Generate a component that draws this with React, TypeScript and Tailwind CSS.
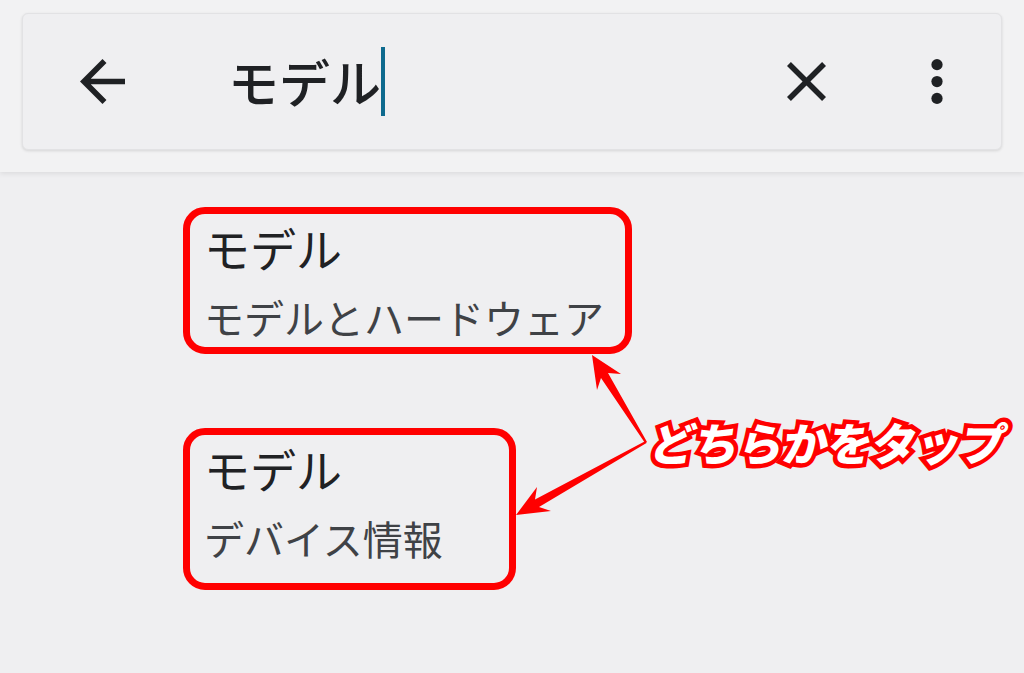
import React from "react";

const jp = "font-['Noto_Sans_CJK_JP','Noto_Sans',sans-serif]";

function BackIcon() {
  return (
    <svg width="45" height="45" viewBox="4 4 16 16" className="shrink-0 fill-[#1f2124]">
      <path d="M20 11H7.83l5.59-5.59L12 4l-8 8 8 8 1.41-1.41L7.83 13H20v-2z" />
    </svg>
  );
}

function CloseIcon() {
  return (
    <svg width="39" height="39" viewBox="5 5 14 14" className="shrink-0 fill-[#1f2124]">
      <path d="M19 6.41L17.59 5 12 10.59 6.41 5 5 6.41 10.59 12 5 17.59 6.41 19 12 13.41 17.59 19 19 17.59 13.41 12z" />
    </svg>
  );
}

function MoreIcon() {
  return (
    <svg width="12" height="45" viewBox="10 4 4 16" className="shrink-0 fill-[#1f2124]">
      <circle cx="12" cy="6" r="2" />
      <circle cx="12" cy="12" r="2" />
      <circle cx="12" cy="18" r="2" />
    </svg>
  );
}

interface ResultProps {
  title: string;
  path: string;
  width: string;
  height: string;
}

function Result({ title, path, width, height }: ResultProps) {
  return (
    <div className={`${width} ${height} border-[7px] border-[#ff0000] rounded-[22px] pl-[14px] pt-[7px] flex flex-col`}>
      <div className="text-[46px] leading-[52px] text-[#202124]">{title}</div>
      <div className="text-[40px] leading-[48px] text-[#3f4246] mt-[20px]">{path}</div>
    </div>
  );
}

function Arrows() {
  return (
    <svg className="absolute left-0 top-0 pointer-events-none" width="1024" height="673" viewBox="0 0 1024 673">
      <polygon
        fill="#ff0000"
        points="592,355 621,374 608,373 647,442 645,443 601,378 597,390"
      />
      <polygon
        fill="#ff0000"
        points="516,515 551,511 539,507 646.5,443 645.5,441 535,499.5 537,487"
      />
    </svg>
  );
}

export default function App() {
  return (
    <div className={`relative w-[1024px] h-[673px] overflow-hidden bg-[#efeff1] ${jp}`}>
      {/* search bar */}
      <div className="h-[172px] bg-[#f2f2f3] px-[22px] pt-[13px] shadow-[0_2px_5px_rgba(0,0,0,0.08)] relative z-10">
        <div className="h-[137px] rounded-[6px] bg-[#efeff1] border border-[#e2e2e4] shadow-[0_1px_3px_rgba(0,0,0,0.12)] flex items-center pl-[57px] pr-[58px]">
          <BackIcon />
          <div className="ml-[103px] flex items-center">
            <span className="text-[51px] leading-none font-medium text-[#1f2124]">モデル</span>
            <span className="w-[4px] h-[69px] bg-[#0e6a8e]" />
          </div>
          <div className="flex-1" />
          <CloseIcon />
          <div className="ml-[105px]">
            <MoreIcon />
          </div>
        </div>
      </div>

      {/* results */}
      <div className="pl-[183px] pt-[35px] flex flex-col gap-[74px]">
        <Result title="モデル" path="モデルとハードウェア" width="w-[449px]" height="h-[147px]" />
        <Result title="モデル" path="デバイス情報" width="w-[333px]" height="h-[162px]" />
      </div>

      {/* annotation */}
      <Arrows />
      <div className="absolute left-[651px] top-[419px] -skew-x-[9deg] text-[45px] leading-none font-black tracking-[-0.6px] text-white [-webkit-text-stroke:9px_#ff0000] [paint-order:stroke_fill]">
        どちらかをタップ
      </div>
    </div>
  );
}
